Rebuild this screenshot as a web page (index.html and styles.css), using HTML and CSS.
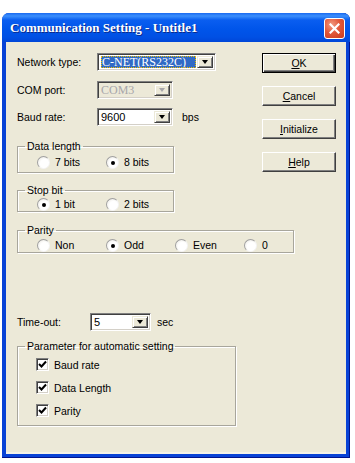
FILE: index.html
```html
<!DOCTYPE html>
<html>
<head>
<meta charset="utf-8">
<link rel="stylesheet" href="styles.css">
</head>
<body>
<div class="window">
  <div class="titlebar">
    <span class="title">Communication Setting - Untitle1</span>
    <span class="close"><svg width="11" height="11" viewBox="0 0 11 11"><path d="M1.5 1.5 L9.5 9.5 M9.5 1.5 L1.5 9.5" stroke="#fff" stroke-width="2.2" stroke-linecap="square"/></svg></span>
  </div>
  <div class="body">
    <div class="top">
      <div class="left">
        <div class="row">
          <span class="lbl">Network type:</span>
          <div class="combo w-net"><span class="val serif"><span class="sel">C-NET(RS232C)</span></span><span class="drop"><i class="arrow"></i></span></div>
        </div>
        <div class="row r2">
          <span class="lbl">COM port:</span>
          <div class="combo w-small disabled"><span class="val serif">COM3</span><span class="drop"><i class="arrow"></i></span></div>
        </div>
        <div class="row r3">
          <span class="lbl">Baud rate:</span>
          <div class="combo w-small"><span class="val">9600</span><span class="drop"><i class="arrow"></i></span></div>
          <span class="unit">bps</span>
        </div>
        <fieldset class="group g-data">
          <legend>Data length</legend>
          <div class="radios">
            <span class="radio"><i class="dot"></i>7 bits</span>
            <span class="radio on"><i class="dot"></i>8 bits</span>
          </div>
        </fieldset>
        <fieldset class="group g-stop">
          <legend>Stop bit</legend>
          <div class="radios">
            <span class="radio on"><i class="dot"></i>1 bit</span>
            <span class="radio"><i class="dot"></i>2 bits</span>
          </div>
        </fieldset>
      </div>
      <div class="buttons">
        <button class="btn default"><u>O</u>K</button>
        <button class="btn"><u>C</u>ancel</button>
        <button class="btn"><u>I</u>nitialize</button>
        <button class="btn"><u>H</u>elp</button>
      </div>
    </div>
    <div class="lower">
      <fieldset class="group g-parity">
        <legend>Parity</legend>
        <div class="radios">
          <span class="radio"><i class="dot"></i>Non</span>
          <span class="radio on"><i class="dot"></i>Odd</span>
          <span class="radio"><i class="dot"></i>Even</span>
          <span class="radio"><i class="dot"></i>0</span>
        </div>
      </fieldset>
      <div class="row r-time">
        <span class="lbl lbl-time">Time-out:</span>
        <div class="combo w-time"><span class="val">5</span><span class="drop"><i class="arrow"></i></span></div>
        <span class="unit unit-sec">sec</span>
      </div>
      <fieldset class="group g-param">
        <legend>Parameter for automatic setting</legend>
        <div class="checks">
          <span class="check"><i class="box"><svg width="9" height="9" viewBox="0 0 9 9"><path d="M1 4 L3.5 6.5 L8 1.5" fill="none" stroke="#000" stroke-width="2"/></svg></i>Baud rate</span>
          <span class="check"><i class="box"><svg width="9" height="9" viewBox="0 0 9 9"><path d="M1 4 L3.5 6.5 L8 1.5" fill="none" stroke="#000" stroke-width="2"/></svg></i>Data Length</span>
          <span class="check"><i class="box"><svg width="9" height="9" viewBox="0 0 9 9"><path d="M1 4 L3.5 6.5 L8 1.5" fill="none" stroke="#000" stroke-width="2"/></svg></i>Parity</span>
        </div>
      </fieldset>
    </div>
  </div>
</div>
</body>
</html>
```
FILE: styles.css
```css
html, body {
  margin: 0;
  padding: 0;
  background: #fff;
}
body {
  font-family: "Liberation Sans", Arial, sans-serif;
  font-size: 10.5px;
  color: #000;
}
.window {
  width: 348px;
  height: 445px;
  margin: 13px 0 0 2px;
  background: #0842d6;
  border-radius: 7px 7px 0 0;
  display: flex;
  flex-direction: column;
  box-shadow: inset 0 -1px #00138c, inset -1px 0 #00138c;
}
.titlebar {
  height: 29px;
  flex: none;
  border-radius: 7px 7px 0 0;
  background: linear-gradient(#1a6af0 0, #3c8ffc 3px, #0a5ef0 7px, #0055ea 16px, #0050e4 24px, #0046d8 29px);
  display: flex;
  align-items: center;
  justify-content: space-between;
  padding: 0 5px 0 8px;
}
.title {
  font-family: "Liberation Serif", serif;
  font-weight: bold;
  font-size: 13px;
  color: #fff;
  text-shadow: 1px 1px #0b2a8a;
  margin-top: 1px;
}
.close {
  width: 19px;
  height: 19px;
  border: 1px solid #fff;
  border-radius: 3px;
  background: radial-gradient(circle at 35% 30%, #f19c82 0, #e2583a 45%, #c93a1c 100%);
  display: flex;
  align-items: center;
  justify-content: center;
  margin-top: 1px;
}
.body {
  flex: 1;
  margin: 0 4px 4px 4px;
  background: #ece9d8;
  box-shadow: inset 0 -2px #f4f2e8;
}
.top {
  display: flex;
  padding: 11px 0 0 11px;
}
.left {
  width: 245px;
}
.row {
  display: flex;
  align-items: center;
  height: 18px;
}
.r2 { margin-top: 10px; }
.r3 { margin-top: 9px; }
.lbl {
  width: 80px;
  flex: none;
}
.lbl-time { width: 73px; }
.unit { margin-left: 9px; }
.unit-sec { margin-left: 6px; }
.combo {
  height: 18px;
  box-sizing: border-box;
  display: flex;
  border: 1px solid;
  border-color: #808080 #fff #fff #808080;
  box-shadow: inset 1px 1px #404040, inset -1px -1px #d4d0c8;
  background: #fff;
  padding: 2px;
}
.w-net { width: 119px; }
.w-small { width: 76px; }
.w-time { width: 61px; }
.combo .val {
  flex: 1;
  display: flex;
  align-items: center;
  overflow: hidden;
  white-space: nowrap;
  padding-left: 1px;
  font-size: 11px;
}
.serif {
  font-family: "Liberation Serif", serif;
}
.combo .val.serif { font-size: 12px; }
.sel {
  background: #316ac5;
  color: #fff;
  flex: 1;
  height: 100%;
  display: flex;
  align-items: center;
  padding-left: 1px;
  margin-right: 1px;
  outline: 1px dotted #f0c000;
  outline-offset: -1px;
}
.drop {
  width: 16px;
  flex: none;
  box-sizing: border-box;
  background: #ece9d8;
  border: 1px solid;
  border-color: #ece9d8 #404040 #404040 #ece9d8;
  box-shadow: inset 1px 1px #fff, inset -1px -1px #808080;
  display: flex;
  align-items: center;
  justify-content: center;
}
.arrow {
  width: 0;
  height: 0;
  border-left: 3.5px solid transparent;
  border-right: 3.5px solid transparent;
  border-top: 4px solid #000;
}
.disabled {
  background: #ece9d8;
  color: #a7a6aa;
}
.disabled .arrow { border-top-color: #a7a6aa; }
.group {
  margin: 0;
  border: 1px solid #a8a69c;
  box-shadow: inset 1px 1px #fff, 1px 1px #fff;
  padding: 2px 0 3px 7px;
  min-width: 0;
  box-sizing: border-box;
}
.group legend {
  padding: 0 2px;
  margin: 0;
  line-height: 13px;
  font-size: 10.5px;
}
.g-data { width: 157px; margin-top: 14px; }
.g-stop { width: 157px; margin-top: 11px; padding-top: 0; padding-bottom: 0; }
.radios {
  display: flex;
  height: 14px;
  align-items: center;
  margin-left: 12px;
}
.radio {
  width: 69px;
  flex: none;
  display: flex;
  align-items: center;
}
.dot {
  width: 13px;
  height: 13px;
  box-sizing: border-box;
  border-radius: 50%;
  border: 1px solid;
  border-color: #a0a0a0 #f4f4f4 #f4f4f4 #a0a0a0;
  background: radial-gradient(circle at 60% 60%, #fff 0, #fff 45%, #e6e4dc 100%);
  margin-right: 5px;
  position: relative;
  flex: none;
}
.radio.on .dot::after {
  content: "";
  position: absolute;
  left: 4px;
  top: 4px;
  width: 4px;
  height: 4px;
  border-radius: 50%;
  background: #000;
}
.buttons {
  display: flex;
  flex-direction: column;
  gap: 13px;
}
.btn {
  width: 74px;
  height: 20px;
  box-sizing: border-box;
  font-family: "Liberation Sans", Arial, sans-serif;
  font-size: 10.5px;
  color: #000;
  background: #ece9d8;
  border: 1px solid;
  border-color: #fff #404040 #404040 #fff;
  box-shadow: inset -1px -1px #808080;
  padding: 0;
  margin: 0;
}
.btn.default {
  border: 1px solid #000;
  box-shadow: inset 1px 1px #fff, inset -1px -1px #404040, inset -2px -2px #808080;
}
.lower {
  padding: 12px 0 0 11px;
}
.g-parity { width: 277px; padding-top: 1px; padding-bottom: 0; }
.r-time { margin-top: 60px; }
.g-param {
  width: 219px;
  margin-top: 9px;
  padding: 5px 0 8px 7px;
}
.checks {
  display: flex;
  flex-direction: column;
  gap: 10px;
  margin-left: 11px;
}
.check {
  display: flex;
  align-items: center;
  height: 13px;
}
.box {
  width: 13px;
  height: 13px;
  box-sizing: border-box;
  border: 1px solid;
  border-color: #808080 #fff #fff #808080;
  box-shadow: inset 1px 1px #404040, inset -1px -1px #d4d0c8;
  background: #fff;
  display: flex;
  align-items: center;
  justify-content: center;
  margin-right: 5px;
  flex: none;
}
```
